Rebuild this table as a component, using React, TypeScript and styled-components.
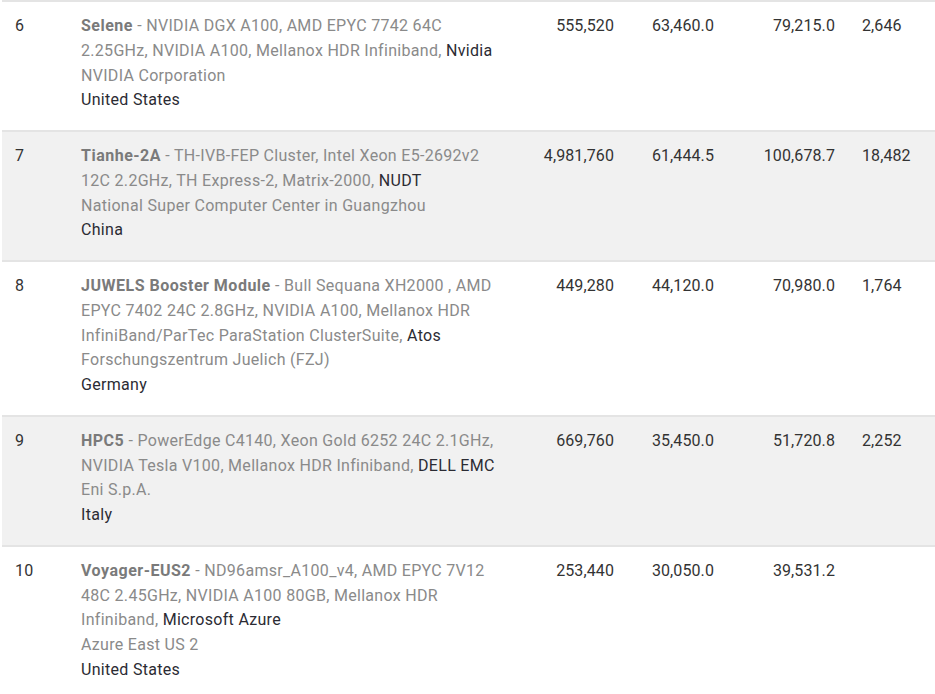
import React from "react";
import styled, { createGlobalStyle } from "styled-components";

type System = {
  rank: number;
  name: string;
  spec: string;
  vendor: string;
  site: string;
  country: string;
  cores: string;
  rmax: string;
  rpeak: string;
  power: string;
};

const systems: System[] = [
  {
    rank: 6,
    name: "Selene",
    spec: "NVIDIA DGX A100, AMD EPYC 7742 64C 2.25GHz, NVIDIA A100, Mellanox HDR Infiniband",
    vendor: "Nvidia",
    site: "NVIDIA Corporation",
    country: "United States",
    cores: "555,520",
    rmax: "63,460.0",
    rpeak: "79,215.0",
    power: "2,646",
  },
  {
    rank: 7,
    name: "Tianhe-2A",
    spec: "TH-IVB-FEP Cluster, Intel Xeon E5-2692v2 12C 2.2GHz, TH Express-2, Matrix-2000",
    vendor: "NUDT",
    site: "National Super Computer Center in Guangzhou",
    country: "China",
    cores: "4,981,760",
    rmax: "61,444.5",
    rpeak: "100,678.7",
    power: "18,482",
  },
  {
    rank: 8,
    name: "JUWELS Booster Module",
    spec: "Bull Sequana XH2000 , AMD EPYC 7402 24C 2.8GHz, NVIDIA A100, Mellanox HDR InfiniBand/ParTec ParaStation ClusterSuite",
    vendor: "Atos",
    site: "Forschungszentrum Juelich (FZJ)",
    country: "Germany",
    cores: "449,280",
    rmax: "44,120.0",
    rpeak: "70,980.0",
    power: "1,764",
  },
  {
    rank: 9,
    name: "HPC5",
    spec: "PowerEdge C4140, Xeon Gold 6252 24C 2.1GHz, NVIDIA Tesla V100, Mellanox HDR Infiniband",
    vendor: "DELL EMC",
    site: "Eni S.p.A.",
    country: "Italy",
    cores: "669,760",
    rmax: "35,450.0",
    rpeak: "51,720.8",
    power: "2,252",
  },
  {
    rank: 10,
    name: "Voyager-EUS2",
    spec: "ND96amsr_A100_v4, AMD EPYC 7V12 48C 2.45GHz, NVIDIA A100 80GB, Mellanox HDR Infiniband",
    vendor: "Microsoft Azure",
    site: "Azure East US 2",
    country: "United States",
    cores: "253,440",
    rmax: "30,050.0",
    rpeak: "39,531.2",
    power: "",
  },
];

const GlobalStyle = createGlobalStyle`
  body {
    margin: 0;
    background: #fff;
    font-family: Roboto, "Liberation Sans", sans-serif;
  }
`;

const Table = styled.table`
  margin-left: 2px;
  width: 933px;
  border-collapse: collapse;
  table-layout: fixed;
  font-size: 16px;
  line-height: 24.8px;
  letter-spacing: 0.3px;
  color: #333;
`;

const Row = styled.tr<{ $shaded: boolean }>`
  background: ${({ $shaded }) => ($shaded ? "#f1f1f1" : "#fff")};
  border-top: 2px solid #e4e4e4;
`;

const Cell = styled.td`
  padding: 12px 0 16.8px;
  vertical-align: top;
`;

const RankCell = styled(Cell)`
  width: 66px;
  padding-left: 13px;
`;

const SystemCell = styled(Cell)`
  width: 428px;
  color: #8a8a8a;
`;

const NumCell = styled(Cell)<{ $w: number }>`
  width: ${({ $w }) => $w}px;
  text-align: right;
  letter-spacing: 0.1px;
`;

const PowerCell = styled(Cell)`
  padding-left: 27px;
  letter-spacing: 0.1px;
`;

const Name = styled.b`
  font-weight: 700;
  letter-spacing: 0.5px;
  color: #7a7a7a;
`;

const Dark = styled.span`
  color: #2b2b33;
`;

const Line = styled.div<{ $dark?: boolean }>`
  color: ${({ $dark }) => ($dark ? "#2b2b33" : "#8a8a8a")};
`;

export default function App() {
  return (
    <>
      <GlobalStyle />
      <Table>
        <tbody>
          {systems.map((s, i) => (
            <Row key={s.rank} $shaded={i % 2 === 1}>
              <RankCell>{s.rank}</RankCell>
              <SystemCell>
                <Name>{s.name}</Name> - {s.spec}, <Dark>{s.vendor}</Dark>
                <Line>{s.site}</Line>
                <Line $dark>{s.country}</Line>
              </SystemCell>
              <NumCell $w={105}>{s.cores}</NumCell>
              <NumCell $w={100}>{s.rmax}</NumCell>
              <NumCell $w={121}>{s.rpeak}</NumCell>
              <PowerCell>{s.power}</PowerCell>
            </Row>
          ))}
        </tbody>
      </Table>
    </>
  );
}
